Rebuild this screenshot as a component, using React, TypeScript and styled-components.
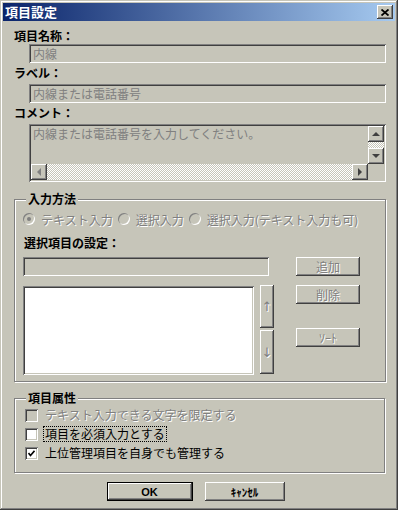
import React from "react";
import styled, { createGlobalStyle, css } from "styled-components";

const face = "#c6c5b9";
const shadow = "#808080";
const dark = "#404040";
const light = "#ffffff";

const GlobalStyle = createGlobalStyle`
	html, body {
		margin: 0;
		padding: 0;
		background: ${face};
	}
	body {
		font-family: "Noto Sans CJK JP", "Noto Sans", sans-serif;
		font-size: 12px;
		color: #000;
	}
	* {
		box-sizing: border-box;
	}
`;

const sunken = css`
	box-shadow:
		inset 1px 1px ${shadow},
		inset -1px -1px ${light},
		inset 2px 2px ${dark},
		inset -2px -2px ${face};
`;

const raised = css`
	box-shadow:
		inset -1px -1px ${dark},
		inset 1px 1px ${light},
		inset -2px -2px ${shadow},
		inset 2px 2px ${face};
`;

const disabledText = css`
	color: ${shadow};
	text-shadow: 1px 1px 0 ${light};
`;

const Window = styled.div`
	display: flex;
	flex-direction: column;
	width: 398px;
	height: 510px;
	padding: 3px;
	background: ${face};
	box-shadow:
		inset -1px -1px ${dark},
		inset 1px 1px ${face},
		inset -2px -2px ${shadow},
		inset 2px 2px ${light};
`;

const TitleBar = styled.div`
	display: flex;
	align-items: center;
	justify-content: space-between;
	height: 18px;
	padding: 0 2px;
	background: linear-gradient(to right, #0a246a, #a6caf0);
`;

const Title = styled.span`
	font-size: 13px;
	font-weight: bold;
	line-height: 18px;
	color: #fff;
`;

const CloseButton = styled.div`
	display: flex;
	align-items: center;
	justify-content: center;
	width: 16px;
	height: 14px;
	background: ${face};
	${raised};
`;

const Body = styled.div`
	display: flex;
	flex: 1;
	flex-direction: column;
	padding: 8px 9px 0 11px;
`;

const Label = styled.div<{ $gap?: number }>`
	height: 14px;
	font-weight: bold;
	line-height: 14px;
	margin-bottom: ${({ $gap }) => $gap ?? 4}px;
`;

const Field = styled.div<{ $width?: number; $indent?: number }>`
	width: ${({ $width }) => $width ?? 357}px;
	height: 19px;
	margin-left: ${({ $indent }) => $indent ?? 15}px;
	margin-bottom: 3px;
	padding: 2px 0 0 4px;
	line-height: 15px;
	color: ${shadow};
	background: ${face};
	${sunken};
`;

const Comment = styled.div`
	display: grid;
	grid-template-columns: 1fr 16px;
	grid-template-rows: 38px 16px;
	width: 357px;
	height: 58px;
	margin-left: 15px;
	padding: 2px;
	background: ${face};
	${sunken};
`;

const CommentText = styled.div`
	padding: 1px 0 0 2px;
	line-height: 14px;
	color: ${shadow};
`;

const checker = css`
	background: repeating-conic-gradient(${light} 0 25%, ${face} 0 50%) 0 0 / 2px 2px;
`;

const VScroll = styled.div`
	display: grid;
	grid-template-rows: 16px 1fr 16px;
	${checker};
`;

const HScroll = styled.div`
	display: grid;
	grid-template-columns: 16px 1fr 16px;
	${checker};
`;

const ScrollButton = styled.div`
	display: flex;
	align-items: center;
	justify-content: center;
	background: ${face};
	${raised};
`;

const Corner = styled.div`
	background: ${face};
`;

const Group = styled.fieldset<{ $height: number; $width?: number; $top: number; $pad: number }>`
	width: ${({ $width }) => $width ?? 372}px;
	height: ${({ $height }) => $height}px;
	margin: ${({ $top }) => $top}px 0 0;
	padding: ${({ $pad }) => $pad}px 8px 0;
	border: 1px solid ${shadow};
	box-shadow:
		inset 1px 1px ${light},
		1px 1px ${light};
`;

const Legend = styled.legend`
	margin-left: 3px;
	padding: 0 2px;
	font-weight: bold;
	line-height: 14px;
	background: ${face};
`;

const RadioRow = styled.div`
	display: flex;
	align-items: center;
	height: 16px;
	margin-top: 1px;
`;

const Radio = styled.span`
	display: flex;
	align-items: center;
	margin-right: 5px;
	${disabledText};
`;

const RadioCircle = styled.span<{ $checked?: boolean }>`
	display: inline-flex;
	align-items: center;
	justify-content: center;
	width: 12px;
	height: 12px;
	margin-right: 6px;
	background: ${face};
	border-radius: 50%;
	box-shadow:
		inset 1px 1px ${shadow},
		inset -1px -1px ${light};

	&::after {
		content: "";
		display: ${({ $checked }) => ($checked ? "block" : "none")};
		width: 4px;
		height: 4px;
		background: ${shadow};
		border-radius: 50%;
	}
`;

const SubLabel = styled.div`
	height: 14px;
	margin: 9px 0 0 1px;
	font-weight: bold;
	line-height: 14px;
`;

const Editor = styled.div`
	display: flex;
	margin-top: 7px;
`;

const EditorLeft = styled.div`
	display: flex;
	flex-direction: column;
	gap: 7px;
	width: 251px;
`;

const ListRow = styled.div`
	display: flex;
	gap: 6px;
`;

const ListBox = styled.div`
	width: 231px;
	height: 89px;
	background: #fff;
	${sunken};
`;

const Arrows = styled.div`
	display: flex;
	flex-direction: column;
	gap: 2px;
	margin-top: -1px;
`;

const ArrowButton = styled.div<{ $h: number }>`
	display: flex;
	align-items: center;
	justify-content: center;
	width: 14px;
	height: ${({ $h }) => $h}px;
	font-family: "DejaVu Sans", sans-serif;
	font-size: 13px;
	background: ${face};
	${raised};
	${disabledText};
`;

const EditorRight = styled.div`
	display: flex;
	flex-direction: column;
	margin-left: 22px;
`;

const PushButton = styled.div<{ $top: number }>`
	display: flex;
	align-items: center;
	justify-content: center;
	width: 64px;
	height: 19px;
	margin-top: ${({ $top }) => $top}px;
	background: ${face};
	${raised};
	${disabledText};
`;

const CheckRow = styled.div`
	display: flex;
	align-items: center;
	height: 16px;
	margin: 0 0 3px 2px;
`;

const CheckBox = styled.span<{ $disabled?: boolean }>`
	display: inline-flex;
	align-items: center;
	justify-content: center;
	width: 13px;
	height: 13px;
	margin-right: 6px;
	background: ${({ $disabled }) => ($disabled ? face : "#fff")};
	${sunken};
`;

const CheckText = styled.span<{ $disabled?: boolean; $focused?: boolean }>`
	padding: 0 1px;
	line-height: 14px;
	outline: ${({ $focused }) => ($focused ? "1px dotted #000" : "none")};
	${({ $disabled }) => ($disabled ? disabledText : "")};
`;

const Footer = styled.div`
	display: flex;
	justify-content: center;
	gap: 12px;
	margin-top: 9px;
	padding-right: 9px;
`;

const DialogButton = styled.div<{ $default?: boolean; $width: number }>`
	display: flex;
	align-items: center;
	justify-content: center;
	width: ${({ $width }) => $width}px;
	height: 19px;
	font-family: "Liberation Sans", "Noto Sans CJK JP", sans-serif;
	font-size: 11px;
	font-weight: bold;
	background: ${face};
	border: ${({ $default }) => ($default ? "1px solid #000" : "none")};
	${raised};
`;

const Triangle = ({ dir, color = dark }: { dir: "up" | "down" | "left" | "right"; color?: string }) => {
	const points = {
		up: "0,4 4,0 8,4",
		down: "0,0 8,0 4,4",
		left: "4,0 4,8 0,4",
		right: "0,0 0,8 4,4",
	}[dir];
	const w = dir === "up" || dir === "down" ? 8 : 4;
	const h = dir === "up" || dir === "down" ? 4 : 8;
	return (
		<svg height={h} viewBox={`0 0 ${w} ${h}`} width={w}>
			<polygon fill={color} points={points} />
		</svg>
	);
};

export default function App() {
	return (
		<>
			<GlobalStyle />
			<Window>
				<TitleBar>
					<Title>項目設定</Title>
					<CloseButton>
						<svg height="7" viewBox="0 0 8 7" width="8">
							<path d="M0.5 0.5 L7.5 6.5 M7.5 0.5 L0.5 6.5" stroke="#000" strokeWidth="1.8" />
						</svg>
					</CloseButton>
				</TitleBar>
				<Body>
					<Label $gap={1}>項目名称：</Label>
					<Field>内線</Field>
					<Label>ラベル：</Label>
					<Field>内線または電話番号</Field>
					<Label>コメント：</Label>
					<Comment>
						<CommentText>内線または電話番号を入力してください。</CommentText>
						<VScroll>
							<ScrollButton>
								<Triangle dir="up" />
							</ScrollButton>
							<div />
							<ScrollButton>
								<Triangle dir="down" />
							</ScrollButton>
						</VScroll>
						<HScroll>
							<ScrollButton>
								<Triangle color={shadow} dir="left" />
							</ScrollButton>
							<div />
							<ScrollButton>
								<Triangle dir="right" />
							</ScrollButton>
						</HScroll>
						<Corner />
					</Comment>
					<Group $height={190} $pad={4} $top={10}>
						<Legend>入力方法</Legend>
						<RadioRow>
							<Radio>
								<RadioCircle $checked />
								テキスト入力
							</Radio>
							<Radio>
								<RadioCircle />
								選択入力
							</Radio>
							<Radio>
								<RadioCircle />
								選択入力(テキスト入力も可)
							</Radio>
						</RadioRow>
						<SubLabel>選択項目の設定：</SubLabel>
						<Editor>
							<EditorLeft>
								<Field $indent={0} $width={246}></Field>
								<ListRow>
									<ListBox />
									<Arrows>
										<ArrowButton $h={43}>↑</ArrowButton>
										<ArrowButton $h={44}>↓</ArrowButton>
									</Arrows>
								</ListRow>
							</EditorLeft>
							<EditorRight>
								<PushButton $top={0}>追加</PushButton>
								<PushButton $top={9}>削除</PushButton>
								<PushButton $top={24}>ｿｰﾄ</PushButton>
							</EditorRight>
						</Editor>
					</Group>
					<Group $height={82} $pad={2} $top={9} $width={371}>
						<Legend>項目属性</Legend>
						<CheckRow>
							<CheckBox $disabled />
							<CheckText $disabled>テキスト入力できる文字を限定する</CheckText>
						</CheckRow>
						<CheckRow>
							<CheckBox />
							<CheckText $focused>項目を必須入力とする</CheckText>
						</CheckRow>
						<CheckRow>
							<CheckBox>
								<svg height="7" viewBox="0 0 7 7" width="7">
									<path d="M0.5 3 L2.5 5.5 L6.5 0.8" fill="none" stroke="#000" strokeWidth="1.6" />
								</svg>
							</CheckBox>
							<CheckText>上位管理項目を自身でも管理する</CheckText>
						</CheckRow>
					</Group>
					<Footer>
						<DialogButton $default $width={86}>
							OK
						</DialogButton>
						<DialogButton $width={80}>ｷｬﾝｾﾙ</DialogButton>
					</Footer>
				</Body>
			</Window>
		</>
	);
}
